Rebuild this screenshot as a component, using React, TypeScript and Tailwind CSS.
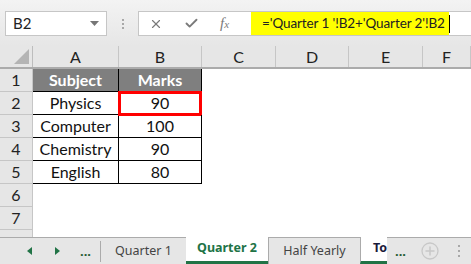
import { X, Check } from "lucide-react";

const cols = [
  { key: "A", w: "w-[86px]" },
  { key: "B", w: "w-[83px]" },
  { key: "C", w: "w-[74px]" },
  { key: "D", w: "w-[73px]" },
  { key: "E", w: "w-[74px]" },
  { key: "F", w: "w-[48px]" },
];

const data = [
  ["Physics", "90"],
  ["Computer", "100"],
  ["Chemistry", "90"],
  ["English", "80"],
];

const cellFont = { fontFamily: "Lato, 'Open Sans', sans-serif" };
const uiFont = { fontFamily: "'Noto Sans', 'Open Sans', sans-serif" };

function FormulaBar() {
  return (
    <div className="flex h-[46px] items-start bg-gradient-to-b from-[#f3f3f3] to-[#e6e6e6] pt-[11px]">
      {/* Name box */}
      <div className="ml-[5px] flex h-[25px] w-[102px] items-center justify-between border border-[#c6c6c6] bg-white pl-[7px] pr-[7px]">
        <span className="text-[15px] text-[#222]" style={cellFont}>
          B2
        </span>
        <svg width="9" height="5" viewBox="0 0 9 5">
          <path d="M0 0h9L4.5 5z" fill="#767676" />
        </svg>
      </div>
      <div className="flex h-[25px] w-[31px] flex-col items-center justify-center gap-[2px]">
        <span className="h-[2px] w-[2px] bg-[#a8a8a8]" />
        <span className="h-[2px] w-[2px] bg-[#a8a8a8]" />
        <span className="h-[2px] w-[2px] bg-[#a8a8a8]" />
      </div>
      {/* Formula box */}
      <div className="flex h-[25px] flex-1 items-center border border-r-0 border-[#c6c6c6] bg-white">
        <div className="flex w-[112px] items-center text-[#7a7a7a]">
          <X className="ml-[10px] h-[14px] w-[14px]" strokeWidth={2} />
          <Check className="ml-[21px] h-[15px] w-[15px]" strokeWidth={3} />
          <span
            className="ml-[21px] text-[15px] italic"
            style={{ fontFamily: "'Liberation Serif', serif" }}
          >
            f<span className="text-[11px]">x</span>
          </span>
        </div>
        <div
          className="flex h-[23px] w-[198px] items-center overflow-hidden whitespace-nowrap bg-[#ffff00] pl-[11px] text-[13.5px] tracking-[-0.1px] text-[#222]"
          style={cellFont}
        >
          ='Quarter 1 '!B2+'Quarter 2'!B2
        </div>
        <div className="h-[18px] w-px bg-black" />
      </div>
    </div>
  );
}

function ColumnHeader() {
  return (
    <div className="flex h-[23px] border-b-2 border-[#ababab] bg-[#e6e6e6]" style={cellFont}>
      <div className="relative w-[33px] border-r border-[#bdbdbd]">
        <svg className="absolute bottom-[3px] right-[3px]" width="15" height="15" viewBox="0 0 15 15">
          <path d="M15 0v15H0z" fill="#b4b4b4" />
        </svg>
      </div>
      {cols.map((c) => (
        <div
          key={c.key}
          className={`${c.w} flex items-center justify-center border-r border-[#c6c6c6] pt-[1px] text-[16px] text-[#222]`}
        >
          {c.key}
        </div>
      ))}
    </div>
  );
}

function RowHeader({ n }: { n?: number }) {
  return (
    <div className="flex h-[23px] w-[33px] shrink-0 items-center justify-center border-b border-r border-[#c6c6c6] bg-[#e6e6e6] text-[16px] text-[#222]">
      {n}
    </div>
  );
}

function Sheet() {
  return (
    <div className="h-[168px] overflow-hidden bg-white text-[16px] text-[#111]" style={cellFont}>
      {/* row 1 */}
      <div className="flex h-[23px]">
        <RowHeader n={1} />
        <div className="flex w-[86px] items-center justify-center border-b border-r border-black bg-[#7f7f7f] font-bold text-white">
          Subject
        </div>
        <div className="flex w-[83px] items-center justify-center border-b border-r border-black bg-[#7f7f7f] font-bold text-white">
          Marks
        </div>
      </div>
      {data.map((row, i) => (
        <div key={i} className="flex h-[23px]">
          <RowHeader n={i + 2} />
          <div className="flex w-[86px] items-center justify-center border-b border-r border-black">
            {row[0]}
          </div>
          <div className="relative flex w-[83px] items-center justify-center border-b border-r border-black">
            {row[1]}
            {i === 0 && (
              <div className="absolute -left-[1px] -top-[1px] h-[25px] w-[84px] border-[3px] border-[#ff0000]" />
            )}
          </div>
        </div>
      ))}
      <div className="flex h-[23px]">
        <RowHeader n={6} />
      </div>
      <div className="flex h-[23px]">
        <RowHeader n={7} />
      </div>
      <div className="flex h-[23px]">
        <RowHeader />
      </div>
    </div>
  );
}

function TabBar() {
  return (
    <div className="flex h-[27px] items-stretch bg-[#e6e6e6]" style={uiFont}>
      <div className="flex w-[101px] items-center border-t border-[#ababab]">
        <svg className="ml-[27px]" width="5" height="8" viewBox="0 0 5 8">
          <path d="M5 0v8L0 4z" fill="#217346" />
        </svg>
        <svg className="ml-[23px]" width="5" height="8" viewBox="0 0 5 8">
          <path d="M0 0v8l5-4z" fill="#217346" />
        </svg>
        <span className="ml-[20px] text-[13px] font-bold leading-none text-[#1e5a32]">...</span>
        <div className="ml-auto h-[21px] w-px bg-[#ababab]" />
      </div>
      <div className="flex w-[85px] items-center justify-center border-t border-[#ababab] text-[12.5px] text-[#444]">
        Quarter 1
      </div>
      <div className="flex w-[82px] items-center justify-center border-b-[3px] border-[#217346] bg-white pb-[1px] text-[12.5px] font-bold text-[#217346]">
        Quarter 2
      </div>
      <div className="flex w-[92px] items-center justify-center border-l border-t border-[#ababab] text-[12.5px] text-[#444]">
        Half Yearly
      </div>
      <div className="flex w-[27px] items-center border-b-[3px] border-l border-[#217346] border-l-[#ababab] bg-white pb-[1px] pl-[12px] text-[12.5px] font-bold text-[#1a1a3a]">
        To
      </div>
      <div className="flex flex-1 items-center border-t border-[#ababab]">
        <span className="ml-[8px] text-[13px] font-bold leading-none text-[#1e5a32]">...</span>
        <svg className="ml-[15px]" width="18" height="18" viewBox="0 0 18 18">
          <circle cx="9" cy="9" r="8" fill="none" stroke="#c8c8c8" strokeWidth="1.3" />
          <path d="M9 4.5v9M4.5 9h9" stroke="#c8c8c8" strokeWidth="1.5" />
        </svg>
        <div className="ml-[19px] flex flex-col gap-[3px]">
          <span className="h-[2px] w-[2px] bg-[#a8a8a8]" />
          <span className="h-[2px] w-[2px] bg-[#a8a8a8]" />
          <span className="h-[2px] w-[2px] bg-[#a8a8a8]" />
        </div>
      </div>
    </div>
  );
}

export default function App() {
  return (
    <div className="h-[264px] w-[471px] overflow-hidden">
      <FormulaBar />
      <ColumnHeader />
      <Sheet />
      <TabBar />
    </div>
  );
}
